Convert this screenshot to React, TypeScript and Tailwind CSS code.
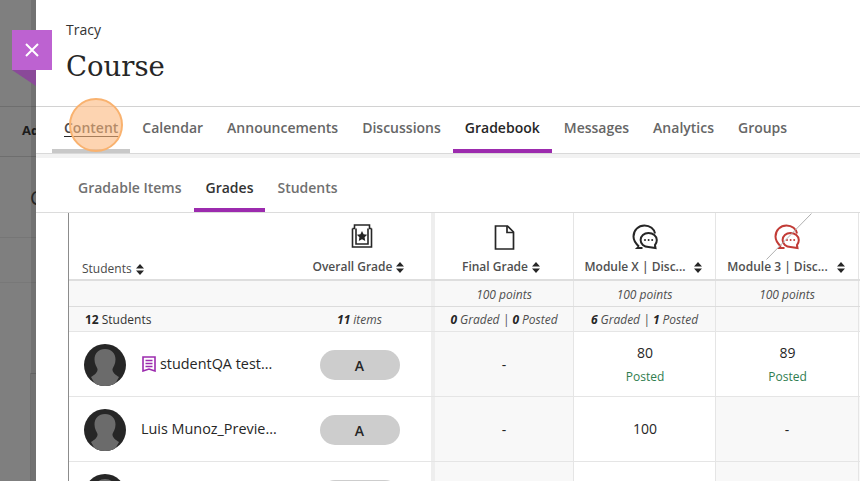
const navItems = ["Content", "Calendar", "Announcements", "Discussions", "Gradebook", "Messages", "Analytics", "Groups"];

const SortIcon = () => (
  <svg width="8" height="11" viewBox="0 0 8 11" className="shrink-0">
    <path d="M4 0 L8 4.4 H0 Z M0 6.6 H8 L4 11 H4 Z" fill="#262626" />
  </svg>
);

const ChatIcon = ({ color }: { color: string }) => (
  <svg width="26" height="26" viewBox="0 0 26 26" fill="none" stroke={color} strokeWidth="2">
    <path d="M7 22.5 C4.8 20.5 1.5 17.6 1.5 12.5 C1.5 6.2 6.4 1.5 12.5 1.5 C18 1.5 22.3 5 23 9.5" />
    <path d="M7 22.5 L5.4 24 H10.5" />
    <path d="M16.5 9 C12 9 8.6 12 8.6 16 C8.6 20 12 23 16.5 23 L23.5 24 L23 21 C24.3 19.7 24.8 18 24.8 16 C24.8 12 21 9 16.5 9 Z" />
    <circle cx="13" cy="16" r="1" fill={color} stroke="none" />
    <circle cx="16.6" cy="16" r="1" fill={color} stroke="none" />
    <circle cx="20.2" cy="16" r="1" fill={color} stroke="none" />
  </svg>
);

const Avatar = () => (
  <svg width="42" height="42" viewBox="0 0 42 42" className="shrink-0">
    <clipPath id="av">
      <circle cx="21" cy="21" r="21" />
    </clipPath>
    <g clipPath="url(#av)">
      <rect width="42" height="42" fill="#262626" />
      <path d="M21 5 C14.5 5 10.5 9.5 10.5 15.5 C10.5 20 12.5 22.5 13.5 25 C14 28 10.5 31 7 33 L12 42 H30 L35 33 C31.5 31 28 28 28.5 25 C29.5 22.5 31.5 20 31.5 15.5 C31.5 9.5 27.5 5 21 5 Z" fill="#6b6b6b" />
    </g>
  </svg>
);

const HeadCell = ({ label, icon, wide }: { label: string; icon?: React.ReactNode; wide?: boolean }) => (
  <div className="flex flex-col items-center justify-end h-full pb-[3px] border-r border-[#e5e5e5] relative">
    <div className="h-[26px] mb-[8px] flex items-center justify-center">{icon}</div>
    <div className={`flex items-center text-[12px] leading-[18px] font-semibold text-[#4f4f4f] ${wide ? "gap-[9px] mr-[2px]" : "gap-[4px] mr-[6px]"}`}>
      <span>{label}</span>
      <SortIcon />
    </div>
  </div>
);

const Cell = ({ children, muted, first }: { children?: React.ReactNode; muted?: boolean; first?: boolean }) => (
  <div
    className={`flex flex-col items-center justify-center border-r border-[#e5e5e5] text-[14px] text-[#262626] ${
      muted ? "bg-[#f8f8f8]" : "bg-white"
    } ${first ? "border-l-4 border-l-[#eeeeee]" : ""}`}
  >
    {children}
  </div>
);

const Pill = ({ label }: { label?: string }) => (
  <div className="w-[80px] h-[30px] rounded-full bg-[#cdcdcd] flex items-center justify-center text-[14px] font-semibold text-[#262626]">
    {label}
  </div>
);

const Score = ({ value }: { value: string }) => (
  <div className="flex flex-col items-center pl-[1px]">
    <span className="text-[14px] leading-[20px] mb-[5px]">{value}</span>
    <span className="text-[12px] leading-[18px] text-[#2f7d4f]">Posted</span>
  </div>
);

const gridCols = "grid grid-cols-[221px_141px_143px_142px_143px_1fr]";

export default function App() {
  return (
    <div className="relative w-[860px] h-[481px] overflow-hidden flex bg-white text-[#262626]" style={{ fontFamily: '"Open Sans", sans-serif' }}>
      {/* dimmed page behind the panel */}
      <div className="relative w-[36px] h-full shrink-0 bg-[#7f7f7f] overflow-hidden flex flex-col">
        <div className="h-[107px] border-b border-[#6e6e6e]" />
        <div className="h-[50px] border-b border-[#6e6e6e] pl-[22px] pt-[14px] text-[13px] font-bold text-[#1c1c1c] whitespace-nowrap">Ad</div>
        <div className="h-[81px] border-b border-[#767676] pl-[30px] pt-[26px] text-[20px] text-[#2a2a2a] whitespace-nowrap">C</div>
        <div className="h-[45px] border-b border-[#787878]" />
        <div className="h-[90px]" />
        <div className="flex-1 ml-[30px] border-l border-t border-[#6e6e6e]" />
        <div className="absolute right-0 top-0 bottom-0 w-[5px] bg-black/10" />
      </div>

      {/* course panel */}
      <div className="flex-1 min-w-0 flex flex-col">
        <header className="h-[107px] shrink-0 border-b border-[#d2d2d2] pl-[30px] pt-[20px]">
          <div className="text-[14px] leading-[19px] text-[#333333]">Tracy</div>
          <h1 className="mt-[6px] text-[27.5px] leading-[42px] text-[#262626]" style={{ fontFamily: '"DejaVu Serif", serif' }}>
            Course
          </h1>
        </header>

        <nav className="h-[47px] shrink-0 flex pl-[16px] border-b border-[#d9d9d9]">
          {navItems.map((item) => (
            <div
              key={item}
              className={`h-[46px] px-[12px] pb-[2px] flex items-center text-[14px] font-semibold border-b-4 ${
                item === "Gradebook"
                  ? "text-[#262626] border-[#9c2bae]"
                  : item === "Content"
                    ? "text-[#4a4a4a] border-[#c8c8c8] underline decoration-[#262626] underline-offset-[3px]"
                    : "text-[#666666] border-transparent"
              }`}
            >
              {item}
            </div>
          ))}
        </nav>
        <div className="h-[4px] shrink-0 bg-[#f2f2f2]" />

        <div className="h-[55px] shrink-0 flex pl-[30px] border-b border-[#dcdcdc]">
          {["Gradable Items", "Grades", "Students"].map((tab) => (
            <div
              key={tab}
              className={`h-[54px] px-[12px] pt-[8px] flex items-center text-[14px] font-semibold border-b-4 ${
                tab === "Grades" ? "text-[#333333] border-[#9c2bae]" : "text-[#707070] border-transparent"
              }`}
            >
              {tab}
            </div>
          ))}
        </div>

        {/* gradebook table */}
        <div className="flex-1 min-h-0 ml-[32px] border-l border-[#8c8c8c] overflow-hidden">
          <div className={`${gridCols} h-[68px] border-b-2 border-[#dedede]`}>
            <div className="flex items-end pl-[13px] pb-[1px] gap-[4px]">
              <span className="text-[12px] leading-[18px] text-[#4a4a4a] font-medium">Students</span>
              <span className="pb-[3px]"><SortIcon /></span>
            </div>
            <div className="flex flex-col items-center justify-end pb-[3px]">
              <div className="h-[26px] mb-[8px] pl-[2px]">
                <svg width="22" height="24" viewBox="0 0 22 24" fill="none" stroke="#262626" strokeWidth="1.6">
                  <path d="M1.5 4.5 V23 H20.5 V4.5" />
                  <path d="M1.5 4.5 H3.5 V1 H18.5 V4.5 H20.5" />
                  <path d="M5 4.5 V20 H17 V4.5" />
                  <path d="M11 7 L12.6 10.3 L16.2 10.8 L13.6 13.3 L14.2 16.9 L11 15.2 L7.8 16.9 L8.4 13.3 L5.8 10.8 L9.4 10.3 Z" fill="#262626" stroke="none" />
                </svg>
              </div>
              <div className="flex items-center gap-[4px] pr-[4px] text-[12px] leading-[18px] font-semibold text-[#4f4f4f]">
                <span>Overall Grade</span>
                <SortIcon />
              </div>
            </div>
            <div className="border-l-4 border-[#eeeeee] h-full">
              <HeadCell
                label="Final Grade"
                icon={
                  <svg width="21" height="25" viewBox="0 0 21 25" fill="none" stroke="#262626" strokeWidth="1.7">
                    <path d="M1.5 1 H13.5 L19.5 7 V24 H1.5 Z" />
                    <path d="M13 1 V7.5 H19.5" />
                  </svg>
                }
              />
            </div>
            <HeadCell label="Module X | Disc..." icon={<ChatIcon color="#262626" />} wide />
            <div className="relative h-full">
              <HeadCell label="Module 3 | Disc..." icon={<ChatIcon color="#c23b36" />} wide />
              <svg width="46" height="47" viewBox="0 0 46 47" className="absolute left-[50px] top-0">
                <path d="M0.5 46.5 L45.5 0.5" stroke="#b0b0b0" strokeWidth="1" />
              </svg>
            </div>
            <div />
          </div>

          <div className={`${gridCols} h-[26px] border-b border-[#dcdcdc] bg-[#f8f8f8] text-[12px] italic text-[#4f4f4f]`}>
            <div />
            <div />
            <div className="border-l-4 border-[#eeeeee] border-r border-r-[#e5e5e5] flex items-center justify-center pt-[2px]">100 points</div>
            <div className="border-r border-[#e5e5e5] flex items-center justify-center pt-[2px]">100 points</div>
            <div className="border-r border-[#e5e5e5] flex items-center justify-center pt-[2px]">100 points</div>
            <div />
          </div>

          <div className={`${gridCols} h-[25px] border-b border-[#e5e5e5] bg-[#f8f8f8] text-[12px] text-[#4f4f4f]`}>
            <div className="pl-[16px] pt-[1px] flex items-center font-medium text-[#333333]">
              <b className="mr-[3px] text-[#262626]">12</b> Students
            </div>
            <div className="flex items-center justify-center italic pt-[1px] pr-[2px]">
              <b className="mr-[3px] text-[#262626]">11</b> items
            </div>
            <div className="border-l-4 border-[#eeeeee] border-r border-r-[#e5e5e5] pt-[1px] flex items-center justify-center italic whitespace-nowrap">
              <b className="mr-[3px] text-[#262626]">0</b> Graded |&nbsp;<b className="mr-[3px] text-[#262626]">0</b> Posted
            </div>
            <div className="border-r border-[#e5e5e5] pt-[1px] flex items-center justify-center italic whitespace-nowrap">
              <b className="mr-[3px] text-[#262626]">6</b> Graded |&nbsp;<b className="mr-[3px] text-[#262626]">1</b> Posted
            </div>
            <div className="border-r border-[#e5e5e5]" />
            <div />
          </div>

          <div className={`${gridCols} h-[65px] border-b border-[#e5e5e5]`}>
            <div className="pl-[15px] flex items-center">
              <div className="pt-[2px]"><Avatar /></div>
              <svg width="14" height="16" viewBox="0 0 14 16" fill="none" stroke="#9c2bae" strokeWidth="1.6" className="ml-[16px] mr-[4px] shrink-0">
                <path d="M1 1 H13 V15 L7 13 L1 15 Z" />
                <path d="M3.5 4.5 H10.5 M3.5 7.5 H10.5 M3.5 10.5 H10.5" />
              </svg>
              <span className="text-[14.4px] font-medium text-[#262626] whitespace-nowrap">studentQA test...</span>
            </div>
            <div className="flex items-center justify-center pt-[2px] pr-[2px]"><Pill label="A" /></div>
            <Cell muted first>-</Cell>
            <Cell><Score value="80" /></Cell>
            <Cell><Score value="89" /></Cell>
            <div className="bg-white" />
          </div>

          <div className={`${gridCols} h-[65px] border-b border-[#e5e5e5]`}>
            <div className="pl-[15px] flex items-center">
              <div className="pt-[2px]"><Avatar /></div>
              <span className="ml-[15px] text-[14.4px] font-medium text-[#262626] whitespace-nowrap">Luis Munoz_Previe...</span>
            </div>
            <div className="flex items-center justify-center pt-[2px] pr-[2px]"><Pill label="A" /></div>
            <Cell muted first>-</Cell>
            <Cell><span className="-mt-[2px] pl-[1px]">100</span></Cell>
            <Cell muted>-</Cell>
            <div className="bg-[#f8f8f8]" />
          </div>

          <div className={`${gridCols} h-[65px]`}>
            <div className="pl-[15px] pt-[12px]"><Avatar /></div>
            <div className="flex justify-center pt-[18px] pr-[2px]"><Pill /></div>
            <Cell muted first />
            <Cell />
            <Cell muted />
            <div className="bg-[#f8f8f8]" />
          </div>
        </div>
      </div>

      {/* close button flag */}
      <div className="absolute left-[12px] top-[30px]">
        <div className="w-[40px] h-[40px] bg-[#bd62d1] flex items-center justify-center">
          <svg width="16" height="16" viewBox="0 0 16 16" stroke="#ffffff" strokeWidth="2">
            <path d="M2 2 L14 14 M14 2 L2 14" />
          </svg>
        </div>
        <svg width="24" height="16" viewBox="0 0 24 16" className="block">
          <path d="M0 0 H24 V16 Z" fill="#8a4a99" />
        </svg>
      </div>

      {/* click highlight */}
      <div className="absolute left-[69px] top-[98px] w-[54px] h-[54px] rounded-full bg-[#fbb77d]/60 border-2 border-[#f9b26f]" />
    </div>
  );
}
